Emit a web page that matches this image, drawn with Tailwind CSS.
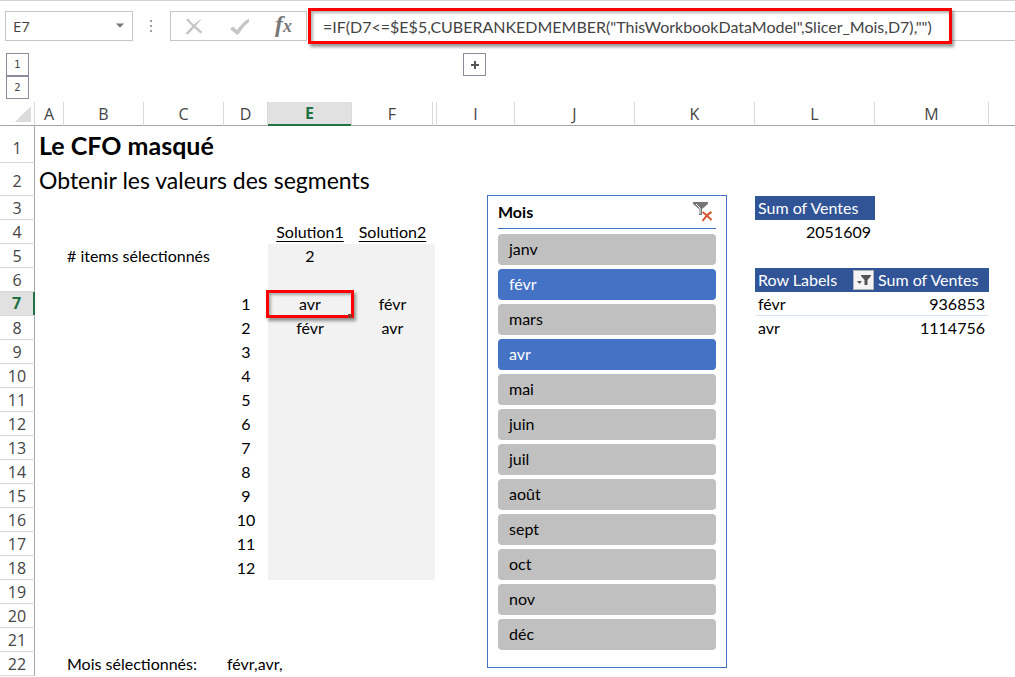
<!DOCTYPE html>
<html lang="fr">
  <head>
    <meta charset="UTF-8">
    <meta name="viewport" content="width=device-width, initial-scale=1.0">
    <title>Le CFO masqué</title>
    <script src="https://cdn.jsdelivr.net/npm/@tailwindcss/browser@4"></script>
  </head>
  <body class="bg-white text-black font-[Lato,sans-serif] text-base leading-5 overflow-x-hidden">
    <!-- Formula bar -->
    <header class="flex items-start h-[53px] pt-[10px] pl-[5px] border-t border-[#d4d4d4] text-[#444]">
      <div class="relative w-32 h-[30px] shrink-0">
        <select aria-label="Zone Nom" class="appearance-none w-full h-full border border-[#c6c6c6] px-[7px] font-['Open_Sans',sans-serif] text-[15px]">
          <option>E7</option>
        </select>
        <svg class="absolute right-2 top-3 pointer-events-none" width="9" height="5" viewBox="0 0 9 5" fill="#777"><path d="M0 0.5h8L4 4.8z"/></svg>
      </div>
      <svg class="mx-4 mt-2 shrink-0" width="5" height="14" viewBox="0 0 5 14" fill="#a0a0a0"><path d="M1 1h2v2H1zM1 6h2v2H1zM1 11h2v2H1z"/></svg>
      <div class="flex items-center justify-between w-[137px] h-[30px] shrink-0 border border-[#c6c6c6] px-[14px]">
        <button aria-label="Annuler">
          <svg width="18" height="17" viewBox="0 0 18 17" fill="#c6c6c6"><path d="M1 1.500L3.500 0.500C5 3 7 5 9 6.500C11 4.500 14 2 17 1C14.500 3.500 12.500 5.500 10.800 8C13 10 15 12 17.500 14L15.500 15.500C13 13.500 11 11.500 9.200 9.700C7 12 5 14.500 3 16.500L0.500 15.500C2.500 13 5 10.500 7.300 8.200C5 6 3 4 1 1.500z"/></svg>
        </button>
        <button aria-label="Entrer">
          <svg width="19" height="17" viewBox="0 0 19 17" fill="#c6c6c6"><path d="M0 11l3-2.500 4 3.500C10 8 14 3 19 0.500V4C14.500 7.500 11 12 8.500 16.500H6.500z"/></svg>
        </button>
        <button aria-label="Insérer une fonction" class="font-['Liberation_Serif',serif] italic font-bold text-2xl leading-6 text-[#777]">f<span class="text-lg">x</span></button>
      </div>
      <div class="grow h-[30px] ml-1 border-y border-[#c6c6c6] relative">
        <input aria-label="Barre de formule" readonly class="absolute -left-[3px] -top-[4px] w-[644px] h-9 border-3 border-[#f00] bg-white pl-3 shadow-[2px_3px_3px_rgba(0,0,0,0.4),inset_2px_2px_3px_rgba(0,0,0,0.3)]" value='=IF(D7&lt;=$E$5,CUBERANKEDMEMBER("ThisWorkbookDataModel",Slicer_Mois,D7),"")'>
      </div>
    </header>

    <!-- Outline levels -->
    <div class="flex items-start h-[49px] pl-[6px] font-['DejaVu_Sans',sans-serif] text-[10px] text-[#444]">
      <div class="flex flex-col">
        <button class="w-[23px] h-[23px] border border-[#8a8d98]">1</button>
        <button class="w-[23px] h-[23px] border border-[#8a8d98]">2</button>
      </div>
      <button aria-label="Développer" class="ml-[434px] w-[23px] h-[23px] border border-[#8a8d98] flex items-center justify-center">
        <svg width="8" height="8" viewBox="0 0 8 8" fill="#555"><path d="M3 0h2v3h3v2H5v3H3V5H0V3h3z"/></svg>
      </button>
    </div>

    <!-- Sheet -->
    <main class="relative">
      <table class="w-full table-fixed border-separate border-spacing-0 whitespace-nowrap [&_td]:p-0 [&_th]:p-0 [&_thead_th]:font-['Open_Sans',sans-serif] [&_thead_th]:border-r [&_thead_th]:border-b [&_thead_th]:border-r-[#d9d9d9] [&_thead_th]:border-b-[#a6a6a6] [&_thead_th:last-child]:border-r-0 [&_tbody_th]:font-['Open_Sans',sans-serif] [&_tbody_th]:border-b [&_tbody_th]:border-r [&_tbody_th]:border-b-[#d9d9d9] [&_tbody_th]:border-r-[#a6a6a6]">
        <colgroup>
          <col class="w-[35px]"><col class="w-[29px]"><col class="w-20"><col class="w-20"><col class="w-11"><col class="w-[84px]"><col class="w-[81px]"><col class="w-1"><col class="w-[78px]"><col class="w-[120px]"><col class="w-[120px]"><col class="w-[120px]"><col class="w-[114px]"><col>
        </colgroup>
        <thead>
          <tr class="h-6 text-[#444] *:font-normal">
            <th><svg class="ml-auto mr-[3px]" width="16" height="16" viewBox="0 0 16 16" fill="#dcdcdc"><path d="M16 0v16H0z"/></svg></th>
            <th>A</th><th>B</th><th>C</th><th>D</th>
            <th><div class="h-6 -mb-px pt-px bg-[#e1e1e1] border-b-2 border-[#217346] font-bold text-[#217346]">E</div></th>
            <th>F</th><th></th><th>I</th><th>J</th><th>K</th><th>L</th><th>M</th><th></th>
          </tr>
        </thead>
        <tbody class="[&_th]:font-normal [&_th]:text-[#444]">
          <tr class="h-[37px]"><th class="align-bottom"><div class="pb-1">1</div></th><td colspan="13"><h1 class="pl-1 text-[25px] font-bold">Le CFO masqué</h1></td></tr>
          <tr class="h-[33px]"><th class="align-bottom"><div class="pb-1">2</div></th><td colspan="13"><h2 class="pl-1 text-[23px]">Obtenir les valeurs des segments</h2></td></tr>
          <tr class="h-6"><th>3</th><td colspan="10"></td><td class="bg-[#305496] text-white"><div class="pl-[3px]">Sum of Ventes</div></td></tr>
          <tr class="h-6"><th>4</th><td colspan="4"></td><td class="text-center underline underline-offset-3">Solution1</td><td class="text-center underline underline-offset-3">Solution2</td><td colspan="4"></td><td class="text-right"><div class="pr-1">2051609</div></td></tr>
          <tr class="h-6"><th>5</th><td></td><td colspan="3"><div class="pl-[3px]"># items sélectionnés</div></td><td class="bg-[#f2f2f2] text-center">2</td><td colspan="2" class="bg-[#f2f2f2] border-r-2 border-white"></td></tr>
          <tr class="h-6"><th>6</th><td colspan="4"></td><td colspan="3" class="bg-[#f2f2f2] border-r-2 border-white"></td><td colspan="3"></td>
            <td class="bg-[#305496] text-white">
              <div class="flex items-center justify-between pl-[3px] pr-px">Row Labels
                <button aria-label="Filtrer" class="w-[21px] h-5 bg-[#f4f4f4] border border-[#b5b5b5] flex items-center justify-center">
                  <svg width="14" height="12" viewBox="0 0 14 12" fill="#555"><path d="M4 1h10v1L10.500 6v5h-3V6L4 2zM0 7h5L2.500 10z"/></svg>
                </button>
              </div>
            </td>
            <td class="bg-[#305496] text-white"><div class="pl-[3px]">Sum of Ventes</div></td></tr>
          <tr class="h-6"><th><div class="h-[23px] -mr-px bg-[#e1e1e1] border-r-2 border-[#217346] pt-px font-bold text-[#217346]">7</div></th><td colspan="3"></td><td class="text-center">1</td>
            <td class="bg-[#f2f2f2] text-center relative">avr
              <div class="absolute -inset-x-[2px] -inset-y-[2px] border-3 border-[#f00] shadow-[2px_3px_3px_rgba(0,0,0,0.4),inset_2px_2px_3px_rgba(0,0,0,0.3)]"></div>
              <span class="absolute right-0 -bottom-[2px] w-1 h-1 bg-[#8a3a2a]"></span>
            </td>
            <td class="bg-[#f2f2f2] text-center">févr</td><td class="bg-[#f2f2f2] border-r-2 border-white"></td><td colspan="3"></td><td class="border-b border-[#d9e1f2]"><div class="pl-[3px]">févr</div></td><td class="text-right border-b border-[#d9e1f2]"><div class="pr-1">936853</div></td></tr>
          <tr class="h-6"><th>8</th><td colspan="3"></td><td class="text-center">2</td><td class="bg-[#f2f2f2] text-center">févr</td><td class="bg-[#f2f2f2] text-center">avr</td><td class="bg-[#f2f2f2] border-r-2 border-white"></td><td colspan="3"></td><td><div class="pl-[3px]">avr</div></td><td class="text-right"><div class="pr-1">1114756</div></td></tr>
          <tr class="h-6"><th>9</th><td colspan="3"></td><td class="text-center">3</td><td colspan="3" class="bg-[#f2f2f2] border-r-2 border-white"></td></tr>
          <tr class="h-6"><th>10</th><td colspan="3"></td><td class="text-center">4</td><td colspan="3" class="bg-[#f2f2f2] border-r-2 border-white"></td></tr>
          <tr class="h-6"><th>11</th><td colspan="3"></td><td class="text-center">5</td><td colspan="3" class="bg-[#f2f2f2] border-r-2 border-white"></td></tr>
          <tr class="h-6"><th>12</th><td colspan="3"></td><td class="text-center">6</td><td colspan="3" class="bg-[#f2f2f2] border-r-2 border-white"></td></tr>
          <tr class="h-6"><th>13</th><td colspan="3"></td><td class="text-center">7</td><td colspan="3" class="bg-[#f2f2f2] border-r-2 border-white"></td></tr>
          <tr class="h-6"><th>14</th><td colspan="3"></td><td class="text-center">8</td><td colspan="3" class="bg-[#f2f2f2] border-r-2 border-white"></td></tr>
          <tr class="h-6"><th>15</th><td colspan="3"></td><td class="text-center">9</td><td colspan="3" class="bg-[#f2f2f2] border-r-2 border-white"></td></tr>
          <tr class="h-6"><th>16</th><td colspan="3"></td><td class="text-center">10</td><td colspan="3" class="bg-[#f2f2f2] border-r-2 border-white"></td></tr>
          <tr class="h-6"><th>17</th><td colspan="3"></td><td class="text-center">11</td><td colspan="3" class="bg-[#f2f2f2] border-r-2 border-white"></td></tr>
          <tr class="h-6"><th>18</th><td colspan="3"></td><td class="text-center">12</td><td colspan="3" class="bg-[#f2f2f2] border-r-2 border-white"></td></tr>
          <tr class="h-6"><th>19</th></tr>
          <tr class="h-6"><th>20</th></tr>
          <tr class="h-6"><th>21</th></tr>
          <tr class="h-6"><th>22</th><td></td><td colspan="2"><div class="pl-[3px]">Mois sélectionnés:</div></td><td colspan="4"><div class="pl-[3px]">févr,avr,</div></td></tr>
        </tbody>
      </table>

      <!-- Slicer floating over the cells -->
      <section class="absolute left-[487px] top-[93px] w-60 h-[473px] bg-white border border-[#4472c4] px-[10px]">
        <div class="flex items-center justify-between h-[33px] border-b border-[#4472c4] pr-[3px]">
          <h3 class="font-bold">Mois</h3>
          <button aria-label="Effacer le filtre">
            <svg width="20" height="20" viewBox="0 0 20 20"><path d="M0 0h15v2L9 7v6H6V7L0 2z" fill="#777"/><path d="M3 2l4 4v6" fill="none" stroke="#fff"/><path d="M9.500 10c3 2 6 5 9 8M18.500 10c-4 2-6 5-9 9" fill="none" stroke="#d65532" stroke-width="2"/></svg>
          </button>
        </div>
        <div class="flex flex-col gap-1 pt-[5px] [&>button]:h-[31px] [&>button]:rounded [&>button]:pl-[11px] [&>button]:pb-[2px] [&>button]:text-left">
          <button class="bg-[#c0c0c0]">janv</button>
          <button class="bg-[#4472c4] text-white">févr</button>
          <button class="bg-[#c0c0c0]">mars</button>
          <button class="bg-[#4472c4] text-white">avr</button>
          <button class="bg-[#c0c0c0]">mai</button>
          <button class="bg-[#c0c0c0]">juin</button>
          <button class="bg-[#c0c0c0]">juil</button>
          <button class="bg-[#c0c0c0]">août</button>
          <button class="bg-[#c0c0c0]">sept</button>
          <button class="bg-[#c0c0c0]">oct</button>
          <button class="bg-[#c0c0c0]">nov</button>
          <button class="bg-[#c0c0c0]">déc</button>
        </div>
      </section>
    </main>
  </body>
</html>
